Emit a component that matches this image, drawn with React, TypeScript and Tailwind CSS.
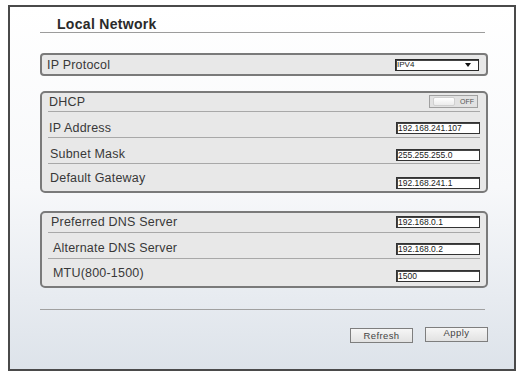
import React from "react";

const font = { fontFamily: '"Liberation Sans", Arial, sans-serif' };

function Field({ value, mt }: { value: string; mt: string }) {
  return (
    <div
      className={`${mt} w-[84px] h-[12px] bg-white border border-[#333] shadow-[inset_1px_1px_0_#444] text-[8.5px] leading-[10px] text-[#1a1a1a] pl-[1px]`}
    >
      {value}
    </div>
  );
}

export default function App() {
  return (
    <div className="w-[525px] h-[379px] bg-white overflow-hidden" style={font}>
      <div className="ml-[8px] mt-[5px] w-[508px] h-[366px] border-2 border-[#4a4a4a] bg-gradient-to-b from-white via-[#f7f8fa] to-[#dde3ea] pl-[30px] flex flex-col">
        {/* Title */}
        <div className="w-[445px] h-[26px] pt-[10px] pb-[2px] border-b border-[#9c9c9c] pl-[17px]">
          <div className="text-[14px] leading-[14px] font-bold text-[#2a2a2a] tracking-[0.3px]">
            Local Network
          </div>
        </div>

        {/* IP Protocol */}
        <div className="mt-[20px] w-[448px] h-[23px] border-2 border-[#7a7a7a] rounded-[4px] bg-[#e8e8e8] flex items-center justify-between pl-[5px] pr-[7px]">
          <span className="text-[12.5px] leading-[14px] text-[#383838] tracking-[0.2px]">IP Protocol</span>
          <div className="w-[84px] h-[12px] bg-white border border-[#2a2a2a] shadow-[inset_1px_1px_0_#444] flex items-center justify-between pl-[1px] pr-[7px]">
            <span className="text-[8px] leading-[10px] text-[#222]">IPV4</span>
            <svg width="6" height="4" viewBox="0 0 6 4">
              <path d="M0 0 L6 0 L3 4 Z" fill="#111" />
            </svg>
          </div>
        </div>

        {/* DHCP group */}
        <div className="mt-[15px] w-[448px] h-[102px] border-2 border-[#7a7a7a] rounded-[5px] bg-[#e8e8e8] flex flex-col">
          <div className="mx-[6px] h-[19px] border-b border-[#a8a8a8] flex justify-between items-start">
            <span className="mt-[2px] pl-[1px] text-[12.5px] leading-[14px] text-[#383838] tracking-[0.2px]">DHCP</span>
            <div className="mt-[2px] mr-[2px] w-[49px] h-[13px] border border-[#a0a0a0] bg-[#e2e2e2] flex items-center">
              <div className="ml-[3px] w-[22px] h-[9px] rounded-[2px] bg-gradient-to-b from-white to-[#ececec] border border-[#d0d0d0]" />
              <span className="ml-auto mr-[3px] text-[7px] leading-[9px] text-[#555]">OFF</span>
            </div>
          </div>
          <div className="mx-[6px] h-[26px] border-b border-[#a8a8a8] flex justify-between items-start">
            <span className="mt-[9px] pl-[1px] text-[12.5px] leading-[14px] text-[#383838] tracking-[0.2px]">IP Address</span>
            <Field value="192.168.241.107" mt="mt-[10px]" />
          </div>
          <div className="mx-[6px] h-[26px] border-b border-[#a8a8a8] flex justify-between items-start">
            <span className="mt-[9px] pl-[2px] text-[12.5px] leading-[14px] text-[#383838] tracking-[0.2px]">Subnet Mask</span>
            <Field value="255.255.255.0" mt="mt-[11px]" />
          </div>
          <div className="mx-[6px] h-[27px] flex justify-between items-start">
            <span className="mt-[7px] pl-[2px] text-[12.5px] leading-[14px] text-[#383838] tracking-[0.2px]">Default Gateway</span>
            <Field value="192.168.241.1" mt="mt-[13px]" />
          </div>
        </div>

        {/* DNS group */}
        <div className="mt-[18px] w-[448px] h-[77px] border-2 border-[#7a7a7a] rounded-[5px] bg-[#e8e8e8] flex flex-col">
          <div className="mx-[6px] h-[20px] border-b border-[#a8a8a8] flex justify-between items-start">
            <span className="mt-[2px] pl-[3px] text-[12.5px] leading-[14px] text-[#383838] tracking-[0.2px]">Preferred DNS Server</span>
            <Field value="192.168.0.1" mt="mt-[3px]" />
          </div>
          <div className="mx-[6px] h-[26px] border-b border-[#a8a8a8] flex justify-between items-start">
            <span className="mt-[8px] pl-[5px] text-[12.5px] leading-[14px] text-[#383838] tracking-[0.2px]">Alternate DNS Server</span>
            <Field value="192.168.0.2" mt="mt-[10px]" />
          </div>
          <div className="mx-[6px] h-[27px] flex justify-between items-start">
            <span className="mt-[7px] pl-[5px] text-[12.5px] leading-[14px] text-[#383838] tracking-[0.2px]">MTU(800-1500)</span>
            <Field value="1500" mt="mt-[11px]" />
          </div>
        </div>

        {/* Bottom line */}
        <div className="mt-[21px] w-[445px] border-b border-[#a0a0a0]" />

        {/* Buttons */}
        <div className="mt-[17px] w-[448px] flex justify-end items-start gap-[12px]">
          <button className="mt-[1px] w-[63px] h-[15px] border border-[#7e7e7e] bg-gradient-to-b from-[#f6f6f6] to-[#e2e2e2] text-[9.5px] leading-[13px] tracking-[0.4px] text-[#444]">
            Refresh
          </button>
          <button className="w-[63px] h-[15px] border border-[#7e7e7e] bg-gradient-to-b from-[#f6f6f6] to-[#e2e2e2] text-[9.5px] leading-[10px] pb-[3px] tracking-[0.4px] text-[#444]">
            Apply
          </button>
        </div>
      </div>
    </div>
  );
}
